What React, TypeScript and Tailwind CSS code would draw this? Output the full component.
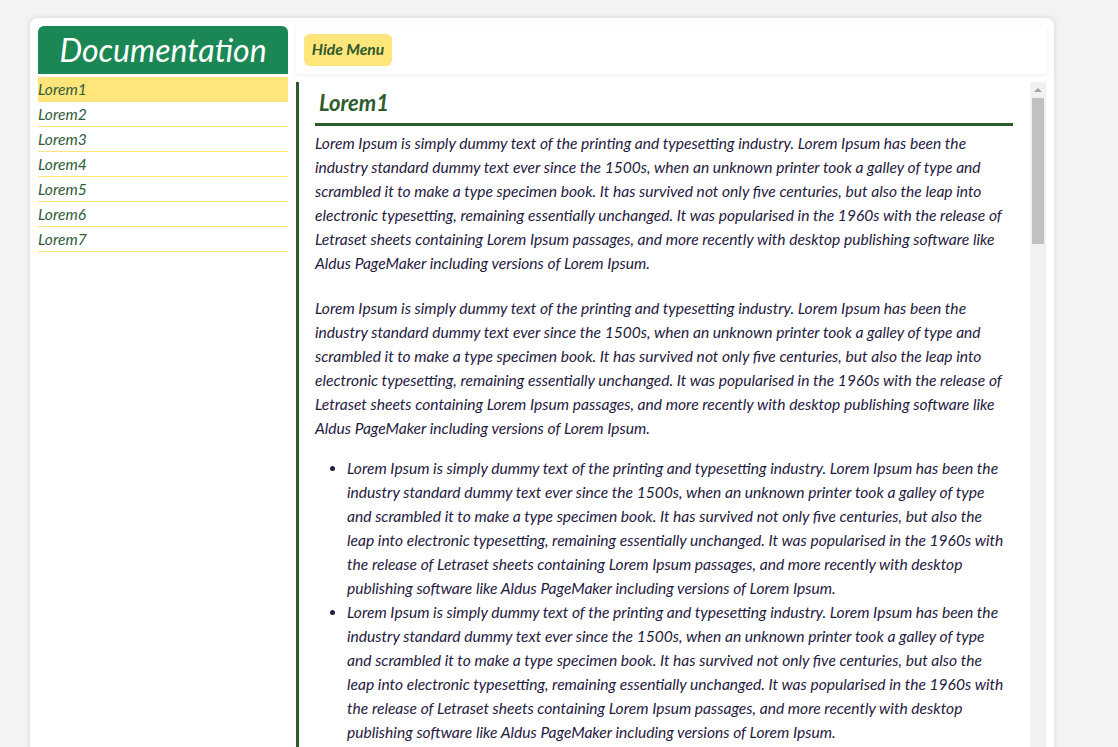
import { useState } from 'react';

const LOREM =
  'Lorem Ipsum is simply dummy text of the printing and typesetting industry. Lorem Ipsum has been the industry standard dummy text ever since the 1500s, when an unknown printer took a galley of type and scrambled it to make a type specimen book. It has survived not only five centuries, but also the leap into electronic typesetting, remaining essentially unchanged. It was popularised in the 1960s with the release of Letraset sheets containing Lorem Ipsum passages, and more recently with desktop publishing software like Aldus PageMaker including versions of Lorem Ipsum.';

const sections = ['Lorem1', 'Lorem2', 'Lorem3', 'Lorem4'];
const menu = ['Lorem1', 'Lorem2', 'Lorem3', 'Lorem4', 'Lorem5', 'Lorem6', 'Lorem7'];

export default function App() {
  const [active, setActive] = useState(0);
  const [open, setOpen] = useState(true);

  return (
    <div className="h-screen overflow-hidden bg-[#f3f3f3] font-['Lato','Noto_Sans',sans-serif] italic">
      <div className="ml-[30px] mt-[18px] w-[1024px] h-screen bg-white rounded-lg shadow-[0_0_6px_rgba(0,0,0,0.12)] p-2 flex gap-2">
        {open && (
          <aside className="w-[250px] shrink-0">
            <div className="h-12 bg-[#1a8754] rounded-t-md flex items-center justify-center text-white text-[32px] leading-none">
              Documentation
            </div>
            <ul className="mt-[3px]">
              {menu.map((m, i) => (
                <li
                  key={m}
                  onClick={() => setActive(i)}
                  className={`h-[25px] leading-6 text-[15.6px] text-[#2f5d3a] border-b border-[#ffe57a] cursor-pointer ${
                    i === active ? 'bg-[#ffe57a]' : ''
                  }`}
                >
                  {m}
                </li>
              ))}
            </ul>
          </aside>
        )}

        <div className="flex-1 flex flex-col gap-2 min-w-0">
          <div className="h-12 shrink-0 bg-white shadow-[0_1px_4px_rgba(0,0,0,0.08)] p-2 flex items-center">
            <button
              onClick={() => setOpen(!open)}
              className="h-8 w-[88px] rounded-md bg-[#ffe57a] text-[#2d5a2e] text-[15.6px] font-bold italic"
            >
              {open ? 'Hide Menu' : 'Show Menu'}
            </button>
          </div>

          <div className="h-[683px] flex border-l-[3px] border-[#2b5b2b]">
            <div className="flex-1 min-w-0 overflow-hidden pl-4 pr-[17.5px] pt-[7px] text-[15.6px] leading-6 text-[#1f2040]">
              {sections.map((s) => (
                <section key={s} className="mb-6">
                  <h2 className="text-[22px] leading-[28px] font-bold text-[#2d5b2d] pl-1 pb-[6px] border-b-[3px] border-[#2b5b2b] mb-[5px]">
                    {s}
                  </h2>
                  <p className="mb-[21px]">{LOREM}</p>
                  <p className="mb-4">{LOREM}</p>
                  <ul className="list-disc pl-8">
                    <li>{LOREM}</li>
                    <li>{LOREM}</li>
                  </ul>
                </section>
              ))}
            </div>

            {/* scrollbar */}
            <div className="w-4 shrink-0 bg-[#f1f1f1] flex flex-col items-center">
              <div className="h-4 flex items-center justify-center">
                <div className="w-0 h-0 border-l-4 border-r-4 border-b-4 border-l-transparent border-r-transparent border-b-[#a3a3a3]" />
              </div>
              <div className="w-3 h-[146px] bg-[#c1c1c1]" />
            </div>
          </div>
        </div>
      </div>
    </div>
  );
}
